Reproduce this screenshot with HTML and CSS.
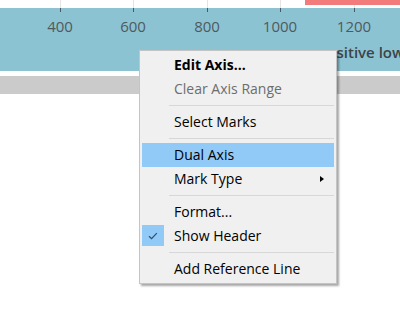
FILE: index.html
```html
<!DOCTYPE html>
<html>
<head>
<meta charset="utf-8">
<link rel="stylesheet" href="styles.css">
</head>
<body>
<div class="chart">
  <div class="plot">
    <span class="grid" style="left:60px"></span>
    <span class="grid" style="left:133px"></span>
    <span class="grid" style="left:207px"></span>
    <span class="grid" style="left:280px"></span>
    <span class="grid" style="left:354px"></span>
    <span class="bar"></span>
  </div>
  <div class="axis">
    <span class="tick" style="left:60px"></span>
    <span class="tick" style="left:133px"></span>
    <span class="tick" style="left:207px"></span>
    <span class="tick" style="left:280px"></span>
    <span class="tick" style="left:354px"></span>
    <span class="label" style="left:60px">400</span>
    <span class="label" style="left:133px">600</span>
    <span class="label" style="left:207px">800</span>
    <span class="label" style="left:280px">1000</span>
    <span class="label" style="left:354px">1200</span>
    <span class="title">positive low</span>
  </div>
  <div class="gap"></div>
  <div class="band"></div>
</div>

<div class="menu">
  <div class="item bold">Edit Axis...</div>
  <div class="item disabled">Clear Axis Range</div>
  <div class="sep"></div>
  <div class="item">Select Marks</div>
  <div class="sep"></div>
  <div class="item active">Dual Axis</div>
  <div class="item">Mark Type<span class="arrow"></span></div>
  <div class="sep"></div>
  <div class="item">Format...</div>
  <div class="item"><span class="check"><svg width="10" height="8" viewBox="0 0 10 8"><path d="M1 4.2 L3.6 6.6 L8.8 1.2" fill="none" stroke="#2d4d6e" stroke-width="1.2"/></svg></span>Show Header</div>
  <div class="sep"></div>
  <div class="item">Add Reference Line</div>
</div>
</body>
</html>
```

FILE: styles.css
```css
html, body {
  margin: 0;
  padding: 0;
  background: #ffffff;
  width: 400px;
  height: 328px;
  overflow: hidden;
}

.chart {
  display: flex;
  flex-direction: column;
}

.plot {
  position: relative;
  height: 8px;
}

.grid {
  position: absolute;
  top: 0;
  width: 1px;
  height: 8px;
  background: #e4e4e4;
}

.bar {
  position: absolute;
  left: 305px;
  top: 0;
  width: 95px;
  height: 5px;
  background: #f27b7b;
}

.axis {
  position: relative;
  height: 63px;
  background: #8cc3d3;
  overflow: hidden;
}

.tick {
  position: absolute;
  top: 0;
  width: 1px;
  height: 4px;
  background: #4a5a60;
}

.label {
  position: absolute;
  top: 8px;
  transform: translateX(-50%);
  font-family: "Open Sans", sans-serif;
  font-size: 15px;
  line-height: 20px;
  color: #4f5a5e;
}

.title {
  position: absolute;
  left: 318px;
  top: 34px;
  font-family: "Open Sans", sans-serif;
  font-size: 15px;
  font-weight: 600;
  line-height: 20px;
  color: #3b4548;
  white-space: nowrap;
}

.gap {
  height: 5px;
}

.band {
  height: 18px;
  background: #cbcbcb;
}

.menu {
  position: absolute;
  left: 139px;
  top: 50px;
  width: 192px;
  padding: 2px 2px;
  background: #f0f0f0;
  border: 1px solid #c4c4c4;
  box-shadow: 2px 2px 2px rgba(0, 0, 0, 0.35);
  font-family: "Open Sans", sans-serif;
  font-size: 14px;
  color: #000;
}

.item {
  position: relative;
  height: 24px;
  line-height: 24px;
  padding-left: 32px;
}

.item.bold {
  font-weight: 700;
}

.item.disabled {
  color: #6d6d6d;
}

.item.active {
  background: #91c9f7;
}

.sep {
  height: 1px;
  margin: 4px 0 4px 27px;
  background: #d7d7d7;
}

.arrow {
  position: absolute;
  left: 178px;
  top: 9px;
  width: 0;
  height: 0;
  border-top: 3.5px solid transparent;
  border-bottom: 3.5px solid transparent;
  border-left: 4px solid #000;
}

.check {
  position: absolute;
  left: 0;
  top: 1px;
  width: 22px;
  height: 21px;
  background: #91c9f7;
  display: flex;
  align-items: center;
  justify-content: center;
}
```
